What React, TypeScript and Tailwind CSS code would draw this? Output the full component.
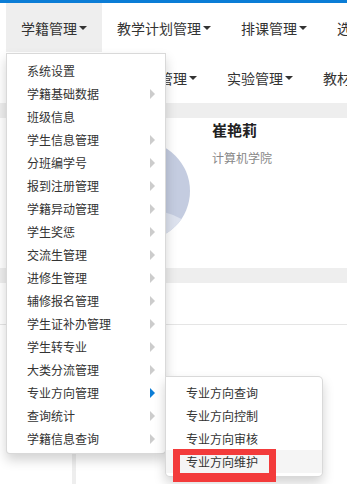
import React from "react";

type Item = { label: string; sub?: boolean; active?: boolean };

const menuItems: Item[] = [
  { label: "系统设置" },
  { label: "学籍基础数据", sub: true },
  { label: "班级信息" },
  { label: "学生信息管理", sub: true },
  { label: "分班编学号", sub: true },
  { label: "报到注册管理", sub: true },
  { label: "学籍异动管理", sub: true },
  { label: "学生奖惩", sub: true },
  { label: "交流生管理", sub: true },
  { label: "进修生管理", sub: true },
  { label: "辅修报名管理", sub: true },
  { label: "学生证补办管理", sub: true },
  { label: "学生转专业", sub: true },
  { label: "大类分流管理", sub: true },
  { label: "专业方向管理", sub: true, active: true },
  { label: "查询统计", sub: true },
  { label: "学籍信息查询", sub: true },
];

const subItems = ["专业方向查询", "专业方向控制", "专业方向审核", "专业方向维护"];

function Caret() {
  return (
    <span className="ml-[2px] inline-block h-0 w-0 border-x-4 border-t-4 border-b-0 border-x-transparent border-t-[#333]" />
  );
}

function NavItem({ label, open }: { label: string; open?: boolean }) {
  return (
    <div
      className={
        "flex shrink-0 items-center px-[15px] text-[14px] leading-5 text-[#333] " +
        (open ? "bg-[#eeeeee]" : "")
      }
    >
      <span className="whitespace-nowrap">{label}</span>
      <Caret />
    </div>
  );
}

function Avatar() {
  return (
    <svg width="100" height="100" viewBox="0 0 100 100" className="shrink-0">
      <defs>
        <clipPath id="av">
          <circle cx="50" cy="50" r="50" />
        </clipPath>
      </defs>
      <circle cx="50" cy="50" r="50" fill="#c4cce0" />
      <g clipPath="url(#av)">
        <circle cx="50" cy="40" r="22" fill="#dde2ee" />
        <ellipse cx="50" cy="104" rx="60" ry="36" fill="#dde2ee" />
      </g>
    </svg>
  );
}

function SubMenu() {
  return (
    <div className="absolute left-full top-[-5px] z-20 w-[158px] rounded-[5px] rounded-tl-none border border-black/15 bg-white pt-1 pb-[3px] shadow-[0_6px_12px_rgba(0,0,0,0.175)]">
      {subItems.map((s, i) => (
        <div
          key={s}
          className={
            "px-5 py-[3px] text-[12px] leading-[17px] text-[#333] whitespace-nowrap " +
            (i === subItems.length - 1 ? "bg-[#f5f5f5]" : "")
          }
        >
          {s}
        </div>
      ))}
    </div>
  );
}

function DropMenu() {
  return (
    <div className="absolute left-[6px] top-[53px] z-10 w-[160px] rounded-b-[4px] border border-black/15 bg-white pt-[5px] pb-[3px] shadow-[0_6px_12px_rgba(0,0,0,0.175)]">
      {menuItems.map((it) => (
        <div
          key={it.label}
          className="relative flex items-center justify-between py-[3px] pl-5 pr-[10px] text-[12px] leading-[17px] text-[#333]"
        >
          <span className="whitespace-nowrap">{it.label}</span>
          {it.sub && (
            <span
              className={
                "inline-block h-0 w-0 border-y-[5px] border-l-[5px] border-r-0 border-y-transparent " +
                (it.active ? "border-l-[#0b7dd6]" : "border-l-[#cccccc]")
              }
            />
          )}
          {it.active && <SubMenu />}
        </div>
      ))}
    </div>
  );
}

export default function App() {
  return (
    <div className="relative flex h-[484px] w-[347px] flex-col overflow-hidden bg-white font-['Noto_Sans_CJK_SC','Noto_Sans',sans-serif]">
      {/* top strip */}
      <div className="h-[3px] shrink-0 bg-[#0b7dd6]" />

      {/* nav rows */}
      <div className="flex h-[49px] shrink-0 pl-[6px]">
        <NavItem label="学籍管理" open />
        <NavItem label="教学计划管理" />
        <NavItem label="排课管理" />
        <NavItem label="选课管理" />
      </div>
      <div className="flex h-[51px] shrink-0 pl-[20px]">
        <NavItem label="考试管理" />
        <NavItem label="成绩管理" />
        <NavItem label="实验管理" />
        <NavItem label="教材管理" />
      </div>

      <div className="h-[15px] shrink-0 bg-[#eeeeee]" />

      {/* profile */}
      <div className="flex h-[150px] shrink-0 items-start pl-[90px] pt-[2px]">
        <div className="mt-[21px]">
          <Avatar />
        </div>
        <div className="ml-[22px] flex flex-col">
          <span className="text-[15px] font-bold leading-5 text-[#222]">崔艳莉</span>
          <span className="mt-[9px] text-[12px] leading-[18px] text-[#888]">计算机学院</span>
        </div>
      </div>

      <div className="h-[15px] shrink-0 bg-[#eeeeee]" />
      <div className="h-[42px] shrink-0 border-b border-[#e5e5e5]" />

      <div className="flex flex-1">
        <div className="w-[72px]" />
        <div className="w-[4px] bg-[#eeeeee]" />
        <div className="flex-1" />
      </div>

      <DropMenu />

      {/* highlight annotation */}
      <div className="absolute left-[173px] top-[449px] z-30 h-[33px] w-[103px] border-x-[7px] border-t-[6px] border-b-[9px] border-[#f33b3b]" />
    </div>
  );
}
